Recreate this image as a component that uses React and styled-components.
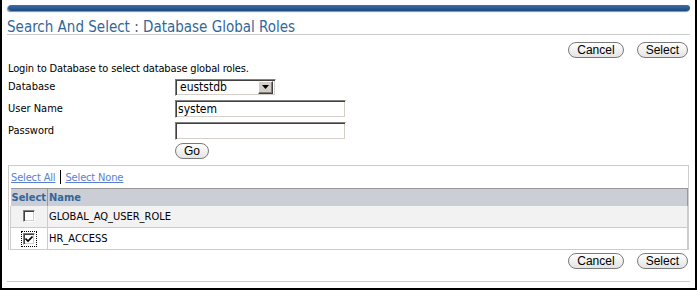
import React from "react";
import styled, { createGlobalStyle } from "styled-components";

const GlobalStyle = createGlobalStyle`
  html, body { margin: 0; padding: 0; background: #fff; }
  body { font-family: "DejaVu Sans Condensed", "DejaVu Sans", sans-serif; font-size: 11px; color: #000; }
  * { box-sizing: border-box; }
`;

const Frame = styled.div`
  width: 697px;
  height: 290px;
  border: 2px solid #000;
  border-top: 0;
  padding: 5px 5px 0 5px;
  display: flex;
  flex-direction: column;
  overflow: hidden;
`;

const TopBar = styled.div`
  flex: none;
  height: 6px;
  margin-left: 1px;
  border-radius: 3px;
  background: linear-gradient(#3c6da5, #1b4a82);
  box-shadow: -1px 1px 1px #8a8a8a;
`;

const Title = styled.h1`
  flex: none;
  margin: 9px 0 0 0;
  font-family: "DejaVu Sans Condensed", "DejaVu Sans", sans-serif;
  font-weight: normal;
  font-size: 15px;
  line-height: 14px;
  height: 15px;
  color: #336699;
  border-bottom: 1px solid #cccccc;
  padding-bottom: 0;
`;

const ButtonRow = styled.div`
  flex: none;
  display: flex;
  justify-content: flex-end;
  gap: 13px;
  padding-right: 2px;
  margin-top: ${(p) => p.$top || 0}px;
`;

const Button = styled.button`
  height: 16px;
  padding: 0 8px;
  border: 1px solid #7a7a7a;
  border-radius: 8px;
  background: linear-gradient(#ffffff, #e4e4e4);
  font-family: "Liberation Sans", Arial, sans-serif;
  font-size: 12px;
  line-height: 14px;
  color: #000;
  cursor: pointer;
`;

const Intro = styled.div`
  flex: none;
  margin: 4px 0 0 1px;
  line-height: 14px;
  letter-spacing: -0.15px;
`;

const FormGrid = styled.div`
  flex: none;
  display: grid;
  grid-template-columns: 167px auto;
  grid-template-rows: 22px 22px 22px 18px;
  align-items: center;
  margin: 0 0 0 1px;
`;

const Label = styled.div`
  line-height: 14px;
`;

const Field = styled.div`
  display: flex;
  align-items: center;
`;

const FakeSelect = styled.div`
  width: 101px;
  height: 17px;
  display: flex;
  align-items: center;
  justify-content: space-between;
  border: 1px solid;
  border-color: #808080 #ffffff #ffffff #808080;
  box-shadow: inset 1px 1px #404040, inset -1px -1px #d4d0c8;
  padding: 0 2px 0 4px;
  font-size: 12px;
  background: #fff;
`;

const DropButton = styled.span`
  width: 15px;
  height: 13px;
  background: #d4d0c8;
  border: 1px solid;
  border-color: #ffffff #404040 #404040 #ffffff;
  box-shadow: inset -1px -1px #808080;
  display: flex;
  align-items: center;
  justify-content: center;
`;

const TextInput = styled.input`
  width: 171px;
  height: 18px;
  margin: 0;
  padding: 0 2px;
  border: 1px solid;
  border-color: #808080 #ffffff #ffffff #808080;
  box-shadow: inset 1px 1px #404040, inset -1px -1px #d4d0c8;
  font-family: "DejaVu Sans Condensed", "DejaVu Sans", sans-serif;
  font-size: 12px;
  outline: none;
`;

const ResultBox = styled.div`
  flex: none;
  margin: 5px 1px 0 1px;
  border: 1px solid #cccccc;
  border-bottom: 0;
`;

const LinkBar = styled.div`
  height: 22px;
  display: flex;
  align-items: center;
  padding-left: 2px;
`;

const Link = styled.a`
  color: #5a7fcf;
  text-decoration: underline;
  font-size: 11px;
  letter-spacing: -0.15px;
  cursor: pointer;
`;

const Separator = styled.span`
  width: 1px;
  height: 14px;
  background: #000;
  margin: 0 4px 0 5px;
`;

const Table = styled.table`
  border-collapse: collapse;
  margin-left: 1px;
  width: calc(100% - 1px);
`;

const HeadCell = styled.th`
  height: 17px;
  padding: 0 1px;
  background: #cbced5;
  border-top: 1px solid #999999;
  border-right: 1px solid #999999;
  color: #336699;
  font-weight: bold;
  font-size: 11px;
  text-align: ${(p) => (p.$center ? "center" : "left")};
  width: ${(p) => (p.$w ? p.$w + "px" : "auto")};
`;

const Row = styled.tr`
  background: ${(p) => (p.$alt ? "#f2f2f2" : "#ffffff")};
`;

const Cell = styled.td`
  height: 22px;
  padding: 0 1px;
  border: 1px solid #cccccc;
  border-top: 0;
  font-size: 11px;
  text-align: ${(p) => (p.$center ? "center" : "left")};
  vertical-align: middle;
`;

const CheckWrap = styled.span`
  display: inline-flex;
  padding: 1px;
  border: 1px dotted ${(p) => (p.$focus ? "#000" : "transparent")};
  vertical-align: middle;
`;

const CheckBox = styled.span`
  width: 12px;
  height: 12px;
  display: flex;
  align-items: center;
  justify-content: center;
  border: 1px solid;
  border-color: #808080 #ffffff #ffffff #808080;
  box-shadow: inset 1px 1px #404040, inset -1px -1px #d4d0c8;
  background: #fff;
`;

const BottomLine = styled.div`
  flex: none;
  margin-top: 12px;
  border-top: 1px solid #cccccc;
`;

function Check({ checked }) {
  return (
    <CheckWrap $focus={checked}>
      <CheckBox>
        {checked && (
          <svg width="8" height="8" viewBox="0 0 8 8">
            <path d="M0.5 3.5 L3 6 L7.5 1.5" stroke="#000" strokeWidth="1.6" fill="none" />
          </svg>
        )}
      </CheckBox>
    </CheckWrap>
  );
}

function Actions({ top }) {
  return (
    <ButtonRow $top={top}>
      <Button>Cancel</Button>
      <Button>Select</Button>
    </ButtonRow>
  );
}

export default function App() {
  return (
    <>
      <GlobalStyle />
      <Frame>
        <TopBar />
        <Title>Search And Select : Database Global Roles</Title>
        <Actions top={7} />
        <Intro>Login to Database to select database global roles.</Intro>
        <FormGrid>
          <Label>Database</Label>
          <Field>
            <FakeSelect>
              <span>euststdb</span>
              <DropButton>
                <svg width="7" height="4" viewBox="0 0 7 4">
                  <path d="M0 0 H7 L3.5 4 Z" fill="#000" />
                </svg>
              </DropButton>
            </FakeSelect>
          </Field>
          <Label>User Name</Label>
          <Field>
            <TextInput defaultValue="system" />
          </Field>
          <Label>Password</Label>
          <Field>
            <TextInput type="password" />
          </Field>
          <span />
          <Field>
            <Button>Go</Button>
          </Field>
        </FormGrid>
        <ResultBox>
          <LinkBar>
            <Link>Select All</Link>
            <Separator />
            <Link>Select None</Link>
          </LinkBar>
          <Table>
            <thead>
              <tr>
                <HeadCell $w={36} $center>Select</HeadCell>
                <HeadCell>Name</HeadCell>
              </tr>
            </thead>
            <tbody>
              <Row $alt>
                <Cell $center><Check /></Cell>
                <Cell>GLOBAL_AQ_USER_ROLE</Cell>
              </Row>
              <Row>
                <Cell $center><Check checked /></Cell>
                <Cell>HR_ACCESS</Cell>
              </Row>
            </tbody>
          </Table>
        </ResultBox>
        <Actions top={3} />
        <BottomLine />
      </Frame>
    </>
  );
}
